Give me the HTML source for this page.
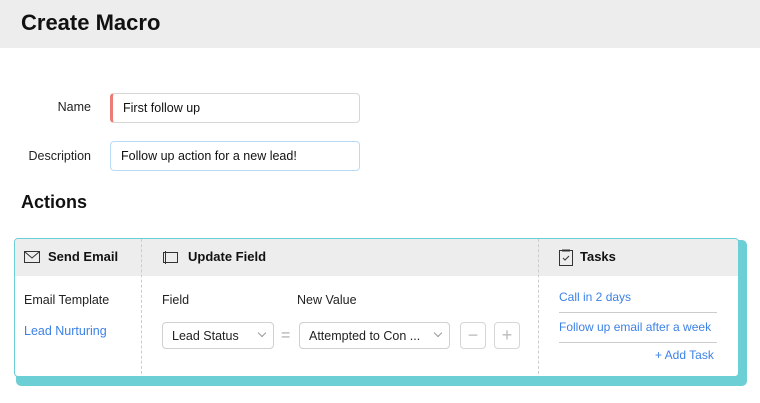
<!DOCTYPE html>
<html><head><style>
*{box-sizing:border-box;margin:0;padding:0}
body{width:760px;height:403px;background:#fff;font-family:"Liberation Sans",sans-serif;color:#222;position:relative;overflow:hidden}
.hdr{position:absolute;left:0;top:0;width:760px;height:48px;background:#ededee}
.hdr h1{position:absolute;left:21px;top:10px;font-size:22px;font-weight:bold;color:#111}
.lbl{position:absolute;font-size:12.5px;color:#222;text-align:right;width:91px;left:0}
.inp{position:absolute;left:110px;width:250px;height:30px;border:1px solid #d6d6d6;border-radius:4px;font-size:12.5px;padding:7px 10px;color:#111}
.act{position:absolute;left:21px;top:192px;font-size:18px;font-weight:bold;color:#111}
.shadow{position:absolute;left:16px;top:240px;width:731px;height:146px;background:#6ccfd6;border-radius:5px}
.card{position:absolute;left:14px;top:238px;width:725px;height:139px;border:1px solid #6ccfd6;border-radius:4px;background:#fff;overflow:hidden}
.ch{position:absolute;left:0;top:0;width:100%;height:37px;background:#ededee}
.dv{position:absolute;top:0;height:140px;border-left:1px dashed #ccc}
.t{position:absolute;font-size:12.5px;white-space:nowrap}
.b{font-weight:bold;color:#111;font-size:13px}
.lk{color:#3c82e6}
.sel{position:absolute;height:27px;border:1px solid #d0d0d0;border-radius:4px;font-size:12.5px;padding:6px 9px;color:#222}
.sel i{position:absolute;right:8px;top:7px;width:6px;height:6px;border-right:1px solid #999;border-bottom:1px solid #999;transform:rotate(45deg)}
.sq{position:absolute;width:26px;height:27px;border:1px solid #d6d6d6;border-radius:4px;color:#bbb;text-align:center;font-size:18px;line-height:24px}
.hr{position:absolute;left:544px;width:158px;border-top:1px solid #ccc}
</style></head><body>
<div class="hdr"><h1>Create Macro</h1></div>
<div class="lbl" style="top:100px">Name</div>
<div class="inp" style="top:93px;border-left:3px solid #ec7c74">First follow up</div>
<div class="lbl" style="top:149px">Description</div>
<div class="inp" style="top:141px;border-color:#b9dbf5">Follow up action for a new lead!</div>
<div class="act">Actions</div>
<div class="shadow"></div>
<div class="card">
<div class="ch"></div>
<div class="dv" style="left:126px"></div>
<div class="dv" style="left:523px"></div>
<svg style="position:absolute;left:9px;top:12px" width="16" height="13"><rect x="0.5" y="0.5" width="15" height="11" fill="none" stroke="#333"/><path d="M1 1 L8 7 L15 1" fill="none" stroke="#333"/></svg>
<div class="t b" style="left:33px;top:10px">Send Email</div>
<svg style="position:absolute;left:146px;top:11px" width="18" height="15"><rect x="2.5" y="2.5" width="14" height="10" fill="none" stroke="#333"/><path d="M4.5 1v13" stroke="#333"/></svg>
<div class="t b" style="left:173px;top:10px">Update Field</div>
<svg style="position:absolute;left:544px;top:10px" width="14" height="17"><rect x="0.5" y="1.5" width="13" height="15" fill="none" stroke="#333"/><path d="M3 1.5h8" stroke="#333" stroke-width="2"/><path d="M4 9l2 2 4-4" fill="none" stroke="#333"/></svg>
<div class="t b" style="left:565px;top:10px">Tasks</div>
<div class="t" style="left:9px;top:54px">Email Template</div>
<div class="t lk" style="left:9px;top:85px">Lead Nurturing</div>
<div class="t" style="left:147px;top:54px">Field</div>
<div class="t" style="left:282px;top:54px">New Value</div>
<div class="sel" style="left:147px;top:83px;width:112px">Lead Status<i></i></div>
<div class="t" style="left:266px;top:88px;color:#aaa;font-size:16px">=</div>
<div class="sel" style="left:284px;top:83px;width:151px">Attempted to Con ...<i></i></div>
<div class="sq" style="left:445px;top:83px">−</div>
<div class="sq" style="left:479px;top:83px">+</div>
<div class="t lk" style="left:544px;top:51px;font-size:12px">Call in 2 days</div>
<div class="hr" style="top:73px"></div>
<div class="t lk" style="left:544px;top:81px;font-size:12px">Follow up email after a week</div>
<div class="hr" style="top:103px"></div>
<div class="t lk" style="left:640px;top:109px;font-size:12px">+ Add Task</div>
</div>
</body></html>
